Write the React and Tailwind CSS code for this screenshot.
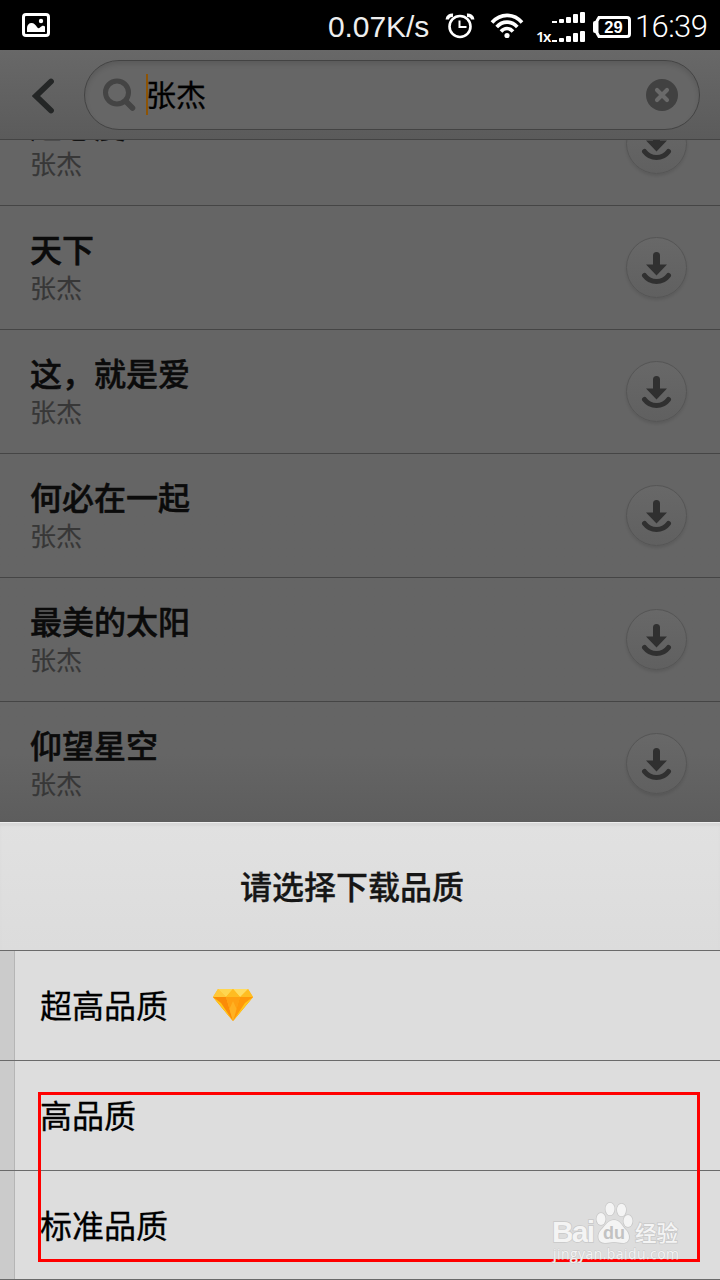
import React from "react";

const SONGS = ["天下", "这，就是爱", "何必在一起", "最美的太阳", "仰望星空"];

const QUALITIES = [
  { label: "超高品质", vip: true },
  { label: "高品质", vip: false },
  { label: "标准品质", vip: false },
];

const SignalBars = () => (
  <svg width="33" height="12" viewBox="0 0 33 12" fill="#fff">
    <rect x="0" y="9" width="5" height="2" />
    <rect x="7" y="7" width="5" height="4" rx="1" />
    <rect x="14" y="5" width="5" height="6" rx="1" />
    <rect x="21" y="2" width="5" height="9" rx="1" />
    <rect x="28" y="0" width="5" height="11" rx="1" />
  </svg>
);

const StatusBar = () => (
  <div className="flex h-[50px] items-center bg-black pl-[22px] text-white">
    <svg width="28" height="24" viewBox="0 0 28 24" fill="none">
      <rect x="1.500" y="1.500" width="25" height="21" rx="2.500" stroke="#fff" strokeWidth="3" />
      <path d="M5 19v-4c0-3 2-5 4.500-5s4 2 5.500 4c1 1.500 2 1.500 3 .5 2-2 3.500-2 5-1V19z" fill="#fff" />
      <circle cx="19" cy="8" r="2.200" fill="#fff" />
    </svg>
    <span className="ml-[278px] mt-[3px] w-[102px] whitespace-nowrap text-[30px] tracking-[-0.1px] text-[#eee]">0.07K/s</span>
    <svg className="ml-[15px] mt-[1px]" width="30" height="26" viewBox="0 0 30 26" fill="none" stroke="#fff">
      <circle cx="15" cy="13.500" r="10.500" strokeWidth="2.600" />
      <path d="M14.500 7.500V14H21.500" strokeWidth="2" />
      <path d="M2.300 6.500C2.500 3.500 5 2 8 2.200M27.700 6.500C27.500 3.500 25 2 22 2.200" strokeWidth="3.500" />
    </svg>
    <svg className="ml-[15px] mt-[2px]" width="34" height="26" viewBox="0 0 34 26" fill="none" stroke="#fff" strokeWidth="3.600">
      <path d="M2 9.500C10.500 0 23.500 0 32 9.500" />
      <path d="M6.700 14C12.500 7.500 21.500 7.500 27.300 14" />
      <path d="M11 18.500C14.500 14.500 19.500 14.500 23 18.500" />
      <circle cx="17" cy="22.500" r="2.600" fill="#fff" stroke="none" />
    </svg>
    <div className="ml-[12px] mt-[5px] flex items-end">
      <span className="mb-[-1px] w-[16px] whitespace-nowrap font-['Noto_Sans'] text-[15px] font-semibold leading-[15px] tracking-[-1.5px]">1x</span>
      <div className="flex flex-col gap-[7px]">
        <SignalBars />
        <SignalBars />
      </div>
    </div>
    <svg className="ml-[8px] mt-[4px]" width="38" height="22" viewBox="0 0 38 22">
      <path d="M6 1.500H34a2.500 2.500 0 0 1 2.500 2.500V18a2.500 2.500 0 0 1-2.500 2.500H6L4 17V5z" fill="none" stroke="#fff" strokeWidth="3" />
      <rect x="0" y="5" width="5" height="12" rx="2" fill="#fff" />
      <text x="20.500" y="17" textAnchor="middle" fill="#fff" fontSize="16.500" fontWeight="700" fontFamily="Liberation Sans, sans-serif">29</text>
    </svg>
    <span className="ml-[4px] mt-[5px] font-[Roboto] text-[31px] font-light tracking-[-0.6px]">16:39</span>
  </div>
);

const SearchHeader = () => (
  <header className="flex h-[90px] items-center border-b border-[#444] bg-linear-to-b from-[#686868] to-[#5b5b5b]">
    <svg className="ml-[32px] mt-[2px]" width="22" height="36" viewBox="0 0 22 36" fill="none">
      <path d="M19 3.500L4 18L19 32.500" stroke="#242626" strokeWidth="5.800" strokeLinecap="round" />
    </svg>
    <div className="ml-[30px] flex h-[70px] w-[616px] items-center rounded-full border border-[#434343] bg-[#666] pl-[18px] pr-[21px] shadow-[inset_0_3px_5px_rgba(0,0,0,0.12)]">
      <svg width="33" height="34" viewBox="0 0 33 34" fill="none" stroke="#444">
        <circle cx="14" cy="14.500" r="11.500" strokeWidth="5" />
        <path d="M22.500 23L29.500 30" strokeWidth="5.500" strokeLinecap="round" />
      </svg>
      <div className="ml-[10px] h-[41px] w-[2px] bg-[#8d5406]" />
      <span className="-ml-[2px] flex-1 pt-[2px] text-[30px] leading-[40px] text-black [-webkit-text-stroke:0.3px]">张杰</span>
      <svg width="32" height="32" viewBox="0 0 32 32">
        <circle cx="16" cy="16" r="16" fill="#414141" />
        <path d="M11 11L21 21M21 11L11 21" stroke="#6a6a6a" strokeWidth="4.200" strokeLinecap="round" />
      </svg>
    </div>
  </header>
);

const DownloadButton = () => (
  <button className="flex h-[61px] w-[61px] items-center justify-center rounded-full border border-[#555] bg-linear-to-b from-[#686868] to-[#606060] shadow-[0_2px_3px_rgba(0,0,0,0.1)]">
    <svg className="mt-[1px]" width="31" height="33" viewBox="0 0 31 33" fill="#303030">
      <path d="M12 3.500a3.500 3.500 0 0 1 7 0V12.500H26L15.500 23.500L5 12.500h7z" />
      <path d="M3.500 23.500C9.500 31.500 21.500 31.500 27.500 23.500" fill="none" stroke="#303030" strokeWidth="5" strokeLinecap="round" />
    </svg>
  </button>
);

const SongRow = ({ title }) => (
  <li className="flex h-[124px] shrink-0 items-center justify-between border-b border-[#454545] pl-[30px] pr-[33px]">
    <div className="pt-[3px]">
      <p className="text-[32px] font-medium leading-[40px] text-[#0b0b0b] [-webkit-text-stroke:0.5px]">{title}</p>
      <p className="text-[26px] leading-[36px] text-[#373737] [-webkit-text-stroke:0.2px]">张杰</p>
    </div>
    <DownloadButton />
  </li>
);

const Diamond = () => (
  <svg className="-mt-[5px] ml-[45px]" width="40" height="32" viewBox="0 0 40 32">
    <path d="M5 0H35L40 8L20 32L0 8z" fill="#ffb61c" />
    <path d="M5 0L13 8H0z" fill="#ffc83a" />
    <path d="M35 0L40 8H27z" fill="#ffbe22" />
    <path d="M5 0L13 8L20 0z" fill="#ffd650" />
    <path d="M20 0L27 8L35 0z" fill="#ffdc62" />
    <path d="M20 0L27 8H13z" fill="#ffbc22" />
    <path d="M0 8H13L20 32z" fill="#fb8b08" />
    <path d="M0 8L20 32L8 14z" fill="#ffc81c" />
    <path d="M13 8H27L20 32z" fill="#ffa012" />
    <path d="M27 8H40L20 32z" fill="#ff980a" />
    <path d="M40 8L20 32L32 14z" fill="#ffc81c" />
    <path d="M16.500 20L20 32L23.500 20L20 12z" fill="#ffd948" opacity="0.3" />
  </svg>
);

const QualitySheet = () => (
  <section className="h-[458px] bg-[#ddd]">
    <h2 className="flex h-[129px] items-center justify-center border-b border-[#6a6a6a] bg-linear-to-b from-[#e1e1e1] to-[#dcdcdc] pr-[16px] pt-[4px] text-[32px] font-medium text-[#161616] shadow-[inset_0_1px_0_#eee,inset_0_4px_2px_#d8d8d8] [-webkit-text-stroke:0.3px]">
      请选择下载品质
    </h2>
    <ul>
      {QUALITIES.map((q) => (
        <li key={q.label} className="flex h-[110px] border-b border-[#6a6a6a] last:h-[109px]">
          <div className="w-[15px] border-r border-[#b5b5b5] bg-[#cbcbcb]" />
          <div className="flex items-center pl-[25px] pt-[3px] text-[32px] text-black [-webkit-text-stroke:0.3px]">
            {q.label}
            {q.vip && <Diamond />}
          </div>
        </li>
      ))}
    </ul>
  </section>
);

const Watermark = () => (
  <svg className="absolute left-[550px] top-[1198px]" width="136" height="68" viewBox="0 0 136 68" fill="#f4f4f4" stroke="#c8c8c8" strokeWidth="1.500" paintOrder="stroke">
    <text x="2" y="44" fontSize="30" fontWeight="700" fontFamily="Liberation Sans, sans-serif" textLength="43">Bai</text>
    <ellipse cx="51" cy="21" rx="4.500" ry="6" />
    <ellipse cx="60" cy="11" rx="4.500" ry="6.300" />
    <ellipse cx="71.500" cy="12" rx="4.500" ry="6.300" />
    <ellipse cx="78" cy="23" rx="4.500" ry="6" />
    <path d="M64 22c6 0 8 6 12 10s5 13-3 13c-4 0-6-1-9-1s-5 1-9 1c-8 0-8-9-4-13s7-10 13-10z" />
    <text x="64" y="41" textAnchor="middle" fontSize="18" fontWeight="700" fill="#c2c2c2" stroke="none" fontFamily="Liberation Sans, sans-serif">du</text>
    <text x="85" y="43" fontSize="21.500" fontWeight="500" fontFamily="Noto Sans CJK SC, sans-serif">经验</text>
    <text x="3" y="61" fontSize="14" strokeWidth="0.800" fontFamily="Open Sans, sans-serif" textLength="126">jingyan.baidu.com</text>
  </svg>
);

const App = () => (
  <div className="relative h-[1280px] w-[720px] overflow-hidden bg-[#656565] font-['Liberation_Sans','Noto_Sans_CJK_SC',sans-serif]">
    <StatusBar />
    <SearchHeader />
    <ul className="flex h-[682px] flex-col overflow-hidden bg-linear-to-b from-[#656565] from-90% to-[#5d5d5d]">
      <div className="flex h-[66px] shrink-0 flex-col justify-end overflow-hidden">
        <SongRow title="超心度" />
      </div>
      {SONGS.map((title) => (
        <SongRow key={title} title={title} />
      ))}
    </ul>
    <QualitySheet />
    {/* highlight around the two free qualities */}
    <div className="absolute left-[38px] top-[1092px] h-[170px] w-[662px] border-3 border-[#f00]" />
    <Watermark />
  </div>
);

export default App;
